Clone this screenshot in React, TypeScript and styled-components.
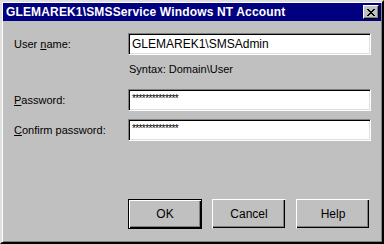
import React from "react";
import styled, { createGlobalStyle } from "styled-components";

const Global = createGlobalStyle`
  html, body { margin: 0; padding: 0; background: #c0c0c0; }
  * { box-sizing: border-box; }
`;

const Window = styled.div`
  width: 384px;
  height: 244px;
  background: #c0c0c0;
  border-style: solid;
  border-width: 2px;
  border-color: #dfdfdf #000 #000 #dfdfdf;
  box-shadow: inset 1px 1px 0 #fff, inset -1px -1px 0 #808080;
  padding: 1px;
  display: flex;
  flex-direction: column;
  font-family: "Liberation Sans", Arial, sans-serif;
  font-size: 11px;
  color: #000;
`;

const TitleBar = styled.div`
  height: 18px;
  background: #000080;
  display: flex;
  align-items: center;
  justify-content: space-between;
  padding: 0 2px 0 3px;
`;

const Title = styled.span`
  color: #fff;
  font-weight: bold;
  font-size: 12px;
  letter-spacing: 0.15px;
`;

const CloseButton = styled.div`
  width: 16px;
  height: 14px;
  background: #c0c0c0;
  border-style: solid;
  border-width: 1px;
  border-color: #fff #000 #000 #fff;
  box-shadow: inset -1px -1px 0 #808080;
  display: flex;
  align-items: center;
  justify-content: center;
`;

const Body = styled.div`
  flex: 1;
  display: flex;
  flex-direction: column;
  padding: 12px 11px 12px 11px;
`;

const Form = styled.div`
  display: grid;
  grid-template-columns: 114px 243px;
  row-gap: 8px;
  align-items: center;
`;

const Label = styled.label`
  white-space: nowrap;
`;

const Field = styled.div`
  height: 22px;
  background: #fff;
  border-style: solid;
  border-width: 1px;
  border-color: #808080 #fff #fff #808080;
  box-shadow: inset 1px 1px 0 #000, inset -1px -1px 0 #dfdfdf;
  display: flex;
  align-items: center;
  padding: 0 3px;
  font-size: 12px;
`;

const Masked = styled.span`
  font-size: 10px;
  letter-spacing: -0.6px;
  align-self: flex-start;
  margin-top: 3px;
`;

const Hint = styled.div`
  grid-column: 2;
  height: 18px;
  line-height: 13px;
  padding-left: 1px;
`;

const Buttons = styled.div`
  margin-top: auto;
  display: flex;
  justify-content: flex-end;
  gap: 10px;
`;

const Button = styled.div<{ $default?: boolean }>`
  width: 74px;
  height: 30px;
  display: flex;
  align-items: center;
  justify-content: center;
  background: #c0c0c0;
  font-size: 12px;
  border-style: solid;
  border-width: 1px;
  border-color: ${(p) => (p.$default ? "#000" : "#fff #c0c0c0 #c0c0c0 #fff")};
  box-shadow: ${(p) =>
    p.$default
      ? "inset 1px 1px 0 #fff, inset -1px -1px 0 #000, inset -2px -2px 0 #808080"
      : "inset -1px -1px 0 #000, inset -2px -2px 0 #808080"};
`;

export default function App() {
  return (
    <>
      <Global />
      <Window>
        <TitleBar>
          <Title>GLEMAREK1\SMSService Windows NT Account</Title>
          <CloseButton>
            <svg width="8" height="7" viewBox="0 0 8 7">
              <path
                d="M0 0h2v1h1v1h2V1h1V0h2v1H7v1H6v1H5v1h1v1h1v1h1v1H6V6H5V5H3v1H2v1H0V6h1V5h1V4h1V3H2V2H1V1H0z"
                fill="#000"
              />
            </svg>
          </CloseButton>
        </TitleBar>
        <Body>
          <Form>
            <Label>
              User <u>n</u>ame:
            </Label>
            <Field>GLEMAREK1\SMSAdmin</Field>
            <Hint>Syntax: Domain\User</Hint>
            <Label>
              <u>P</u>assword:
            </Label>
            <Field>
              <Masked>**************</Masked>
            </Field>
            <Label>
              <u>C</u>onfirm password:
            </Label>
            <Field>
              <Masked>**************</Masked>
            </Field>
          </Form>
          <Buttons>
            <Button $default>OK</Button>
            <Button>Cancel</Button>
            <Button>Help</Button>
          </Buttons>
        </Body>
      </Window>
    </>
  );
}
